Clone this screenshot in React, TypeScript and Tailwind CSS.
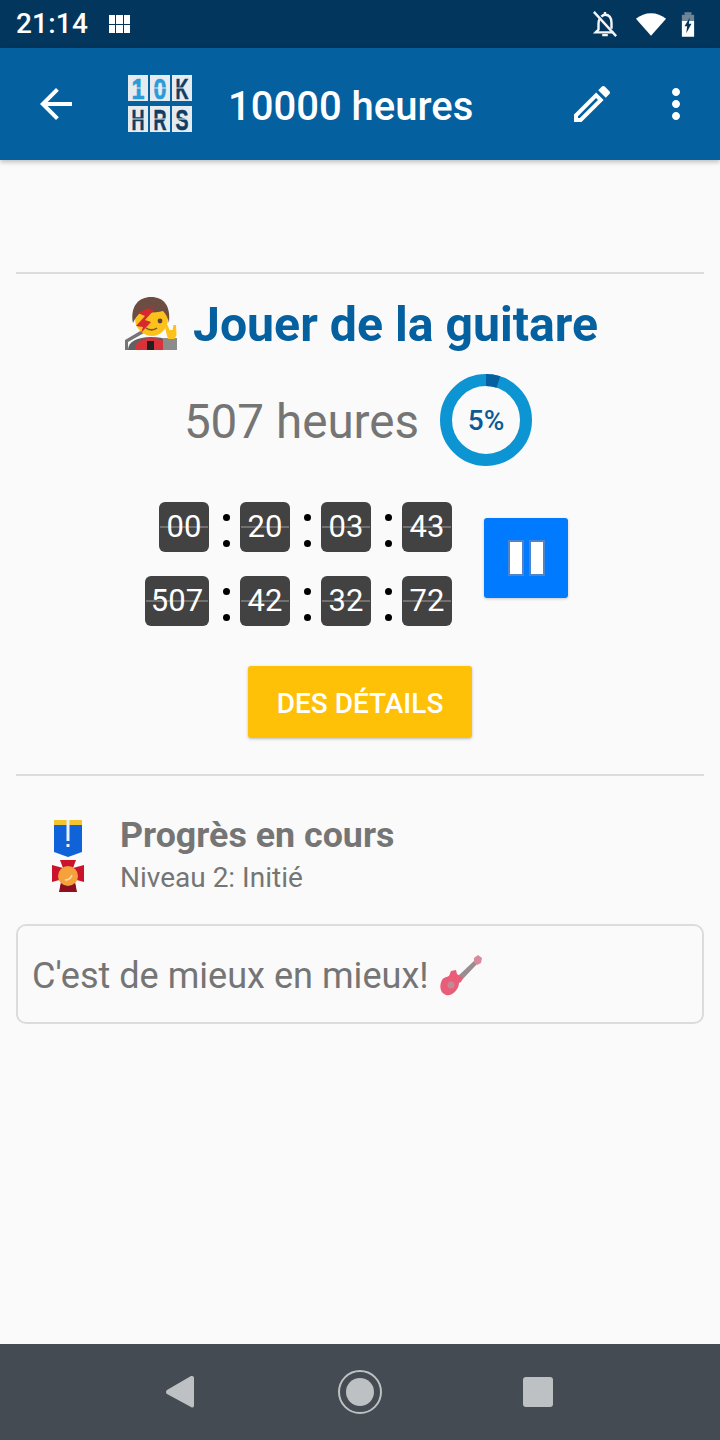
// App.tsx
const rows = [
  ['00', '20', '03', '43'],
  ['507', '42', '32', '72'],
];

function Logo() {
  const tiles = [
    { x: 0, y: 0, t: '1', c: '#2b9bd8' },
    { x: 22, y: 0, t: '0', c: '#2b9bd8' },
    { x: 44, y: 0, t: 'K', c: '#0f3d63' },
    { x: 0, y: 31, t: 'H', c: '#0f3d63' },
    { x: 22, y: 31, t: 'R', c: '#0f3d63' },
    { x: 44, y: 31, t: 'S', c: '#0f3d63' },
  ];
  return (
    <svg width="80" height="78" viewBox="-8 -10 80 78" className="shrink-0">
      {tiles.map(tile => (
        <g key={tile.t}>
          <rect x={tile.x} y={tile.y} width="20" height="26" fill="#e6ebf0" />
          <text
            x={tile.x + 10}
            y={tile.y + 24}
            textAnchor="middle"
            fontFamily="Liberation Sans, sans-serif"
            fontWeight="700"
            fontSize="30"
            textLength="13"
            lengthAdjust="spacingAndGlyphs"
            fill={tile.c}
            stroke={tile.c}
            strokeWidth="0.6"
          >
            {tile.t}
          </text>
          <rect x={tile.x} y={tile.y + 12.5} width="20" height="1" fill="#e6ebf0" />
        </g>
      ))}
    </svg>
  );
}

function FlipCard({ value }: { value: string }) {
  return (
    <div className={`relative flex h-[50px] items-center justify-center rounded-[6px] bg-[#424242] text-[31px] text-white ${value.length > 2 ? 'w-[64px]' : 'w-[50px]'}`}>
      {value}
      <div className="absolute inset-x-[1px] top-[24px] h-[2px] bg-white/25" />
    </div>
  );
}

function Colon() {
  return (
    <div className="flex h-[50px] w-[31px] flex-col items-center justify-center gap-[19px] pl-[4px] pt-[6px]">
      <div className="h-[7px] w-[7px] rounded-full bg-black" />
      <div className="h-[7px] w-[7px] rounded-full bg-black" />
    </div>
  );
}

function Singer() {
  return (
    <svg width="54" height="54" viewBox="0 0 54 54" className="shrink-0">
      <path d="M1 53v-10l17-10 2 3L4 45v8z" fill="#757575" />
      <path d="M4 53c0-8 9-13 23-13s23 4 23 13z" fill="#616161" />
      <path d="M11 53c0-8 7-12 16-12s17 3 17 12z" fill="#d9323a" />
      <rect x="23" y="44" width="7" height="9" fill="#212121" />
      <rect x="39" y="41" width="14" height="12" fill="#8c8c8c" />
      <path d="M11 22c0-12 7-17 17-17s16 6 16 17c0 10-8 17-16 17s-17-7-17-17z" fill="#fcc21b" />
      <path d="M9 26C6 9 15 0 27 0c13 0 20 9 18 26-1-5-3-9-6-12-8 2-16 2-21 1-4 2-7 6-9 11z" fill="#6d4c41" />
      <path d="M33 7L14 16l7 3-9 10 7 1-2 6 10-11-6-2 9-10-6-1z" fill="#d5282f" />
      <circle cx="36" cy="24" r="2.4" fill="#5d4037" />
      <path d="M22 31c3 2.5 8 2.5 11 0" stroke="#7a5a1c" strokeWidth="1.6" fill="none" />
      <path d="M44 42l-2-7-1-7 2.5 0 2 5 3 0 1-5 2.5 0 .5 10-2 4z" fill="#fcc21b" />
    </svg>
  );
}

function Medal() {
  return (
    <svg width="32" height="72" viewBox="0 0 32 72" className="shrink-0">
      <path d="M2 0h28v32L16 37 2 32z" fill="#0f62d8" />
      <rect x="2" y="0" width="28" height="5" fill="#f4c430" />
      <rect x="14.5" y="0" width="3" height="21" fill="#e8f0fb" />
      <rect x="14.5" y="24" width="3" height="3" fill="#e8f0fb" />
      <path d="M8 40h16l-3 8 11-3v17l-11-3 3 8H8l3-8-11 3V45l11 3z" fill="#c9142c" />
      <path d="M9 62h14l2 10H7z" fill="#8e0f1f" />
      <circle cx="16" cy="56" r="10" fill="#f5a13c" />
      <path d="M13 60c3 0 6-2 7-5" stroke="#ffd9a8" strokeWidth="1.6" fill="none" />
    </svg>
  );
}

function Guitar() {
  return (
    <svg width="42" height="42" viewBox="0 0 42 42" className="shrink-0">
      <path d="M17 22L35 5l3 3-17 18z" fill="#9a8d92" />
      <path d="M34 3l4-3 4 3-1 5-4 2-3-3z" fill="#d98a9a" />
      <path d="M11 16l5-1 1 4 6 4-2 4-2 1c0 7-8 14-13 12-6-2-7-9-4-15 2-3 5-3 7-4z" fill="#ea5d78" />
      <circle cx="11" cy="30" r="3.5" fill="#c48a94" />
    </svg>
  );
}

export default function App() {
  return (
    <div className="flex h-[1440px] w-[720px] flex-col overflow-hidden bg-[#fafafa] font-['Roboto',sans-serif]">
      {/* Status bar */}
      <div className="flex h-12 shrink-0 items-center bg-[#03365c] pl-4 pr-[25px] text-white">
        <span className="text-[28px] font-medium leading-none tracking-[0.2px]">21:14</span>
        <div className="ml-[21px] grid h-[18px] w-[21px] grid-cols-3 gap-[1px]">
          {Array.from({ length: 6 }).map((_, i) => (
            <div key={i} className="bg-white" />
          ))}
        </div>
        <div className="ml-auto flex items-center">
          <svg width="26" height="28" viewBox="0 0 28 30" fill="none" stroke="#f2f4f6" strokeWidth="2.6">
            <path d="M2 2l24 26" />
            <path d="M8 10c-1 2-1 3-1 5v6l-3 3h19M10 7c1-1 2-2 4-2 5 0 7 4 7 9v6" />
            <path d="M11 27h6M14 2v3" />
          </svg>
          <svg width="32" height="25" viewBox="0 0 34 26" className="ml-[17px]">
            <path d="M17 25L1 7c9-8 23-8 32 0z" fill="#fff" />
          </svg>
          <svg width="14" height="27" viewBox="0 0 16 28" className="ml-[14px]">
            <rect x="4" y="0" width="8" height="3" fill="#6f8598" />
            <rect x="1" y="3" width="14" height="7" fill="#6f8598" />
            <rect x="1" y="10" width="14" height="18" fill="#fff" />
            <path d="M10 6L4 16h3l-1 8 6-11H9z" fill="#03365c" />
          </svg>
        </div>
      </div>

      {/* App bar */}
      <header className="z-10 flex h-[112px] shrink-0 items-center bg-[#0560a0] text-white shadow-[0_2px_5px_rgba(0,0,0,0.25)]">
        <svg width="48" height="48" viewBox="0 0 24 24" fill="#fff" className="ml-8 shrink-0">
          <path d="M20 11H7.83l5.59-5.59L12 4l-8 8 8 8 1.41-1.41L7.83 13H20v-2z" />
        </svg>
        <div className="ml-[40px] flex"><Logo /></div>
        <h1 className="ml-[28px] mt-[6px] text-[40px] font-medium leading-none">10000 heures</h1>
        <svg width="48" height="48" viewBox="0 0 24 24" fill="#fff" className="ml-auto shrink-0">
          <path d="M3 17.25V21h3.75L17.81 9.94l-3.75-3.75L3 17.25zM5.92 19H5v-.92l9.06-9.06.92.92L5.92 19zM20.71 7.04c.39-.39.39-1.02 0-1.41l-2.34-2.34c-.2-.2-.45-.29-.71-.29s-.51.1-.7.29l-1.83 1.83 3.75 3.75 1.83-1.83z" />
        </svg>
        <svg width="48" height="48" viewBox="0 0 24 24" fill="#fff" className="ml-[36px] mr-[20px] shrink-0">
          <path d="M12 8c1.1 0 2-.9 2-2s-.9-2-2-2-2 .9-2 2 .9 2 2 2zm0 2c-1.1 0-2 .9-2 2s.9 2 2 2 2-.9 2-2-.9-2-2-2zm0 6c-1.1 0-2 .9-2 2s.9 2 2 2 2-.9 2-2-.9-2-2-2z" />
        </svg>
      </header>

      <main className="flex-1 px-4 pt-[112px]">
        <div className="h-[2px] bg-[#dcdcdc]" />

        <div className="mt-[23px] flex h-[54px] items-center justify-center gap-[15px] pl-[2px]">
          <Singer />
          <h2 className="mt-[2px] text-[48.2px] font-bold leading-none text-[#0560a0]">Jouer de la guitare</h2>
        </div>

        <div className="mt-[23px] flex h-[92px] items-center justify-center gap-[21px] pr-[4px]">
          <span className="mt-[6px] text-[47.6px] leading-none text-[#757575]">507 heures</span>
          <div className="relative h-[92px] w-[92px]">
            <svg width="92" height="92" viewBox="0 0 92 92" className="-rotate-90">
              <circle cx="46" cy="46" r="40" fill="none" stroke="#0d94d2" strokeWidth="12" />
              <circle cx="46" cy="46" r="40" fill="none" stroke="#0560a0" strokeWidth="12" strokeDasharray="12.6 251.3" />
            </svg>
            <span className="absolute inset-0 flex items-center justify-center pt-[2px] text-[28px] font-medium text-[#0a5a96]">5%</span>
          </div>
        </div>

        <div className="mt-[36px] flex items-center justify-center pr-[7px]">
          <div className="flex flex-col items-end gap-[24px]">
            {rows.map(row => (
              <div key={row[0]} className="flex items-center">
                {row.map((value, i) => (
                  <div key={i} className="flex items-center">
                    {i > 0 && <Colon />}
                    <FlipCard value={value} />
                  </div>
                ))}
              </div>
            ))}
          </div>
          <button className="mb-[12px] ml-8 flex h-[80px] w-[84px] items-center justify-center gap-[5px] rounded-[3px] bg-[#007bff] shadow-[0_1px_3px_rgba(0,0,0,0.2)]">
            <span className="h-[36px] w-[16px] border-2 border-[#4f84cc] bg-white" />
            <span className="h-[36px] w-[16px] border-2 border-[#4f84cc] bg-white" />
          </button>
        </div>

        <div className="mt-[40px] flex justify-center">
          <button className="flex h-[72px] w-[224px] items-center justify-center rounded-[3px] bg-[#ffc107] pt-[3px] text-[28px] font-medium text-white shadow-[0_1px_3px_rgba(0,0,0,0.25)]">
            DES DÉTAILS
          </button>
        </div>

        <div className="mt-[36px] h-[2px] bg-[#dcdcdc]" />

        <div className="mt-[42px] flex items-center">
          <div className="ml-[36px] flex"><Medal /></div>
          <div className="-mt-[4px] ml-[36px]">
            <div className="text-[35.8px] font-bold leading-[42px] text-[#757575]">Progrès en cours</div>
            <div className="mt-[6px] text-[28px] leading-[32px] text-[#757575]">Niveau 2: Initié</div>
          </div>
        </div>

        <div className="mt-[30px] flex h-[100px] items-center gap-[11px] rounded-[10px] border-2 border-[#dcdcdc] px-[14px] pt-[4px] text-[36.1px] text-[#757575]">
          C'est de mieux en mieux!
          <Guitar />
        </div>
      </main>

      {/* Android nav */}
      <nav className="flex h-[96px] shrink-0 items-center justify-center bg-[#454b52] pr-[2px]">
        <svg width="30" height="34" viewBox="0 0 30 34">
          <path d="M27 1a2 2 0 0 1 2 2v28a2 2 0 0 1-3 1L2 19a2.5 2.5 0 0 1 0-4L26 1z" fill="#bdc1c3" />
        </svg>
        <div className="ml-[143px] flex h-[44px] w-[44px] items-center justify-center rounded-full border-2 border-[#bdc1c3]">
          <div className="h-[28px] w-[28px] rounded-full bg-[#bdc1c3]" />
        </div>
        <div className="ml-[141px] h-[30px] w-[30px] rounded-[3px] bg-[#bdc1c3]" />
      </nav>
    </div>
  );
}
